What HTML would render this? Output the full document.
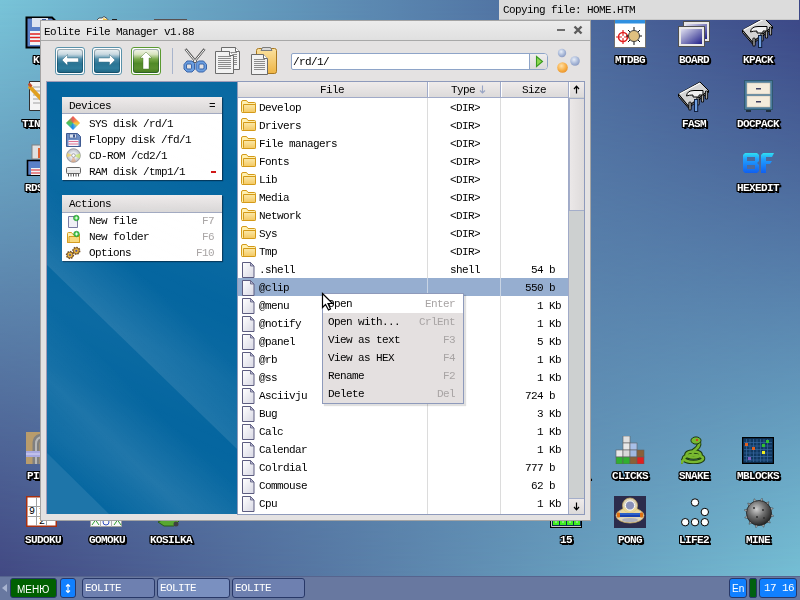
<!DOCTYPE html>
<html><head><meta charset="utf-8">
<style>
*{margin:0;padding:0;box-sizing:border-box}
html,body{width:800px;height:600px;overflow:hidden}
body{position:relative;background:linear-gradient(to right,#404480,#78c4d8);font-family:"Liberation Mono",monospace}
.a{position:absolute}
.t{position:absolute;font-family:"Liberation Mono",monospace;font-size:11px;letter-spacing:-0.6px;line-height:11px;white-space:pre;color:#000;will-change:transform}
.g{color:#a8a4a4}
.lbl{position:absolute;will-change:transform;font-family:"Liberation Mono",monospace;font-size:11px;font-weight:bold;letter-spacing:-0.6px;line-height:11px;white-space:pre;color:#fff;
 text-shadow:-1px 0 #000,0 -1px #000,1px 0 #000,0 1px #000,2px 2px #000,1px 2px #000,2px 1px #000,-1px -1px #000,1px -1px #000,-1px 1px #000}
.hd{position:absolute;top:82px;height:15px;background:linear-gradient(#efebeb,#dcdada);border-left:1px solid #fff}
.fold{position:absolute;width:16px;height:14px}
.doc{position:absolute;width:13px;height:16px}
</style></head><body>
<div class="a" style="left:0;top:0;width:800px;height:600px;background:linear-gradient(to right,#78c4d8,#3a4484);-webkit-mask-image:linear-gradient(to bottom,#000,transparent);mask-image:linear-gradient(to bottom,#000,transparent)"></div>

<svg class="a" style="left:25px;top:16px" width="33" height="33"><path d="M1.5 1.5H27L31.5 6V31.5H1.5Z" fill="#5a80c8" stroke="#000" stroke-width="2"/><rect x="7" y="2" width="16" height="9" fill="#dde4f0"/><rect x="17" y="3" width="4" height="7" fill="#3858a0"/><rect x="5" y="15" width="23" height="14" fill="#f0f4f8"/><path d="M5 18H28M5 21.5H28M5 25H28" stroke="#e02020" stroke-width="1.4"/></svg>
<div class="lbl" style="left:33px;top:55px">KFM</div>
<svg class="a" style="left:28px;top:80px" width="30" height="32"><path d="M1.5 1.5H25.5V30.5H1.5Z" fill="#f4f4f4" stroke="#303030"/><path d="M5 7H22M5 11H22M5 15H22M5 19H22M5 23H22" stroke="#a0a0a0"/><path d="M1 6L16 22" stroke="#e0a020" stroke-width="4"/><path d="M1 6L3 4" stroke="#c05030" stroke-width="4"/></svg>
<div class="lbl" style="left:22px;top:119px">TINYPAD</div>
<svg class="a" style="left:26px;top:144px" width="32" height="32"><rect x="6" y="1" width="18" height="14" fill="#e0e0e0" stroke="#808080"/><rect x="12" y="4" width="6" height="10" fill="#e06030"/><path d="M1.5 16.5H27L30.5 20V31.5H1.5Z" fill="#5a80c8" stroke="#000" stroke-width="1.6"/><rect x="5" y="24" width="21" height="7" fill="#f0f4f8"/><path d="M5 26H26M5 29H26" stroke="#e02020" stroke-width="1.2"/></svg>
<div class="lbl" style="left:25px;top:183px">RDSAVE</div>
<svg class="a" style="left:26px;top:432px" width="32" height="32"><rect width="32" height="32" fill="#b89c6c"/><path d="M10 32V12Q10 5 17 5H32" fill="none" stroke="#808080" stroke-width="7"/><path d="M10 32V12Q10 5 17 5H32" fill="none" stroke="#b8b8b8" stroke-width="2"/><rect x="0" y="19" width="32" height="6" fill="#a8a8e0"/><path d="M0 22H32" stroke="#d8d8f8"/></svg>
<div class="lbl" style="left:27px;top:471px">PIPES</div>
<svg class="a" style="left:26px;top:496px" width="31" height="31"><rect x="0.75" y="0.75" width="29.5" height="29.5" fill="#fff" stroke="#a83010" stroke-width="1.5"/><path d="M10.5 1V30M20.5 1V30M1 10.5H30M1 20.5H30" stroke="#a0a0a0"/><text x="3" y="18" font-family="Liberation Mono" font-size="10" fill="#000">9</text><text x="13" y="28" font-family="Liberation Mono" font-size="10" fill="#000">2</text><text x="13" y="18" font-family="Liberation Mono" font-size="10" fill="#000">1</text></svg>
<div class="lbl" style="left:25px;top:535px">SUDOKU</div>
<svg class="a" style="left:90px;top:496px" width="32" height="31"><rect x="0.5" y="0.5" width="31" height="30" fill="#f8f8f8" stroke="#a0a0a0"/><path d="M10.5 0V31M21.5 0V31M0 10.5H32M0 20.5H32" stroke="#b0b0b0"/><path d="M2 29L5.5 24L9 29M24 29L27.5 24L31 29" fill="none" stroke="#30a030"/><circle cx="16" cy="26" r="3" fill="none" stroke="#3050c0"/></svg>
<div class="lbl" style="left:89px;top:535px">GOMOKU</div>
<svg class="a" style="left:154px;top:496px" width="32" height="31"><path d="M4 26L16 20L26 24L20 30H10Z" fill="#58a830" stroke="#2a5a18"/><circle cx="22" cy="28" r="2.5" fill="#404040"/></svg>
<div class="lbl" style="left:150px;top:535px">KOSILKA</div>
<svg class="a" style="left:550px;top:496px" width="32" height="33"><rect x="0.5" y="0.5" width="31" height="31" fill="#0c3050" stroke="#000"/><path d="M1.5 30.5H31M1.5 1V30.5" stroke="#c8c8c8"/><g fill="#40f020"><rect x="3" y="22" width="6" height="7"/><rect x="10" y="22" width="6" height="7"/><rect x="17" y="22" width="6" height="7"/><rect x="24" y="22" width="6" height="7"/></g><g fill="#a0e8a0" opacity=".7"><rect x="5" y="24" width="2" height="3"/><rect x="12" y="24" width="2" height="3"/><rect x="19" y="24" width="2" height="3"/><rect x="26" y="24" width="2" height="3"/></g></svg>
<div class="lbl" style="left:560px;top:535px">15</div>
<svg class="a" style="left:95px;top:15px" width="24" height="6"><path d="M1.5 5.5L4 3H7L9 1.5L12 3.5L13.5 5.5Z" fill="#f8f8f0" stroke="#303030" stroke-width=".8"/><path d="M8 4L12 5" stroke="#f0c040" stroke-width="1.5"/><rect x="17" y="4" width="5" height="2" fill="#202020"/></svg>
<svg class="a" style="left:154px;top:18px" width="33" height="3"><rect x="0" y="1" width="33" height="2" fill="#585050"/></svg>
<div class="lbl" style="left:542px;top:471px">FREECELL</div>
<svg class="a" style="left:614px;top:16px" width="32" height="32"><rect x="0.5" y="0.5" width="31" height="31" fill="#fff" stroke="#707070"/><rect x="1" y="1" width="30" height="6.5" fill="#3090e0"/><circle cx="9" cy="21" r="4.5" fill="none" stroke="#e02020" stroke-width="1.6"/><path d="M9 14V28M2 21H16" stroke="#e02020" stroke-width="1.2"/><circle cx="9" cy="21" r="1.2" fill="#fff"/><path d="M14 14L26 26M26 14L14 26M20 11V29M12 20H28" stroke="#101010" stroke-width="1"/><circle cx="20" cy="20" r="5.5" fill="#e0c080" stroke="#404040"/></svg>
<div class="lbl" style="left:615px;top:55px">MTDBG</div>
<svg class="a" style="left:678px;top:16px" width="33" height="32"><defs><linearGradient id="bdg" x1="0" y1="0" x2="1" y2="1"><stop offset="0" stop-color="#e0e0f0"/><stop offset="1" stop-color="#202088"/></linearGradient></defs><rect x="5.5" y="5.5" width="26" height="20" fill="#e8e8e8" stroke="#505050"/><rect x="8" y="8" width="21" height="15" fill="url(#bdg)"/><rect x="0.5" y="10.5" width="26" height="20" fill="#e8e8e8" stroke="#505050"/><rect x="3" y="13" width="21" height="15" fill="url(#bdg)"/></svg>
<div class="lbl" style="left:679px;top:55px">BOARD</div>
<svg class="a" style="left:742px;top:16px" width="34" height="34"><path d="M0.5 14L0.5 16.5L10.5 28L30.5 12.5V10.5L10.5 26Z" fill="#909090" stroke="#000" stroke-width="1"/><path d="M0.5 14L22 2L30.5 10.5L10.5 26Z" fill="#d4d4d4" stroke="#000" stroke-width="1"/><path d="M1.5 14L22 3" stroke="#fff" stroke-width="1.2"/><g stroke="#000" stroke-width="3.2" stroke-linecap="round"><path d="M12 23V29M20 18V24M24.5 15V21M28.5 12V18"/></g><g stroke="#a8a8a8" stroke-width="1.4" stroke-linecap="round"><path d="M12 23V29M20 18V24M24.5 15V21M28.5 12V18"/></g><path d="M8.5 16Q9 10.5 16 10.5H25V15H21V17H15V15Q11 15 8.5 16Z" fill="#f0f0f0" stroke="#000"/><rect x="16.5" y="19.5" width="3.2" height="12" fill="#70a0e0" stroke="#102040"/></svg>
<div class="lbl" style="left:743px;top:55px">KPACK</div>
<svg class="a" style="left:678px;top:80px" width="34" height="34"><path d="M0.5 14L0.5 16.5L10.5 28L30.5 12.5V10.5L10.5 26Z" fill="#909090" stroke="#000" stroke-width="1"/><path d="M0.5 14L22 2L30.5 10.5L10.5 26Z" fill="#d4d4d4" stroke="#000" stroke-width="1"/><path d="M1.5 14L22 3" stroke="#fff" stroke-width="1.2"/><g stroke="#000" stroke-width="3.2" stroke-linecap="round"><path d="M12 23V29M20 18V24M24.5 15V21M28.5 12V18"/></g><g stroke="#a8a8a8" stroke-width="1.4" stroke-linecap="round"><path d="M12 23V29M20 18V24M24.5 15V21M28.5 12V18"/></g><path d="M8.5 16Q9 10.5 16 10.5H25V15H21V17H15V15Q11 15 8.5 16Z" fill="#f0f0f0" stroke="#000"/><rect x="16.5" y="19.5" width="3.2" height="12" fill="#70a0e0" stroke="#102040"/></svg>
<div class="lbl" style="left:682px;top:119px">FASM</div>
<svg class="a" style="left:744px;top:80px" width="29" height="32"><rect x="0.5" y="0.5" width="28" height="29" fill="#4a7c9c" stroke="#305870"/><rect x="3" y="3" width="23" height="11" fill="#f4ecdc" stroke="#c8c0b0" stroke-width=".6"/><rect x="3" y="16" width="23" height="11" fill="#f4ecdc" stroke="#c8c0b0" stroke-width=".6"/><rect x="12" y="8" width="5" height="1.5" fill="#404060"/><rect x="12" y="21" width="5" height="1.5" fill="#404060"/><rect x="2" y="30" width="5" height="2" fill="#203040"/><rect x="22" y="30" width="5" height="2" fill="#203040"/></svg>
<div class="lbl" style="left:737px;top:119px">DOCPACK</div>
<svg class="a" style="left:742px;top:152px" width="32" height="22"><defs><linearGradient id="hx" x1="0" y1="0" x2="0" y2="1"><stop offset="0" stop-color="#30e0f0"/><stop offset=".3" stop-color="#20a0ff"/><stop offset="1" stop-color="#1060f0"/></linearGradient></defs><path d="M3 1H15L17 3V9L15 11L17 13V19L15 21H3L1 19V3Z M5 5V9H13V5Z M5 13V17H13V13Z" fill="url(#hx)" fill-rule="evenodd"/><path d="M21 1H32L30 5H24V9H30L28 12H24V21H19V3Z" fill="url(#hx)"/></svg>
<div class="lbl" style="left:737px;top:183px">HEXEDIT</div>
<svg class="a" style="left:615px;top:436px" width="30" height="28"><g stroke="#606060" stroke-width=".6"><rect x="8" y="0" width="7" height="7" fill="#e0e0e0"/><rect x="8" y="7" width="7" height="7" fill="#e8e8e8"/><rect x="15" y="7" width="7" height="7" fill="#a8c0e8"/><rect x="1" y="14" width="7" height="7" fill="#e8e8e8"/><rect x="8" y="14" width="7" height="7" fill="#d8d8d8"/><rect x="15" y="14" width="7" height="7" fill="#a0b8e0"/><rect x="22" y="14" width="7" height="7" fill="#8a6038"/><rect x="1" y="21" width="7" height="7" fill="#30b030"/><rect x="8" y="21" width="7" height="7" fill="#30b030"/><rect x="15" y="21" width="7" height="7" fill="#8a6038"/><rect x="22" y="21" width="7" height="7" fill="#e02020"/></g></svg>
<div class="lbl" style="left:612px;top:471px">CLICKS</div>
<svg class="a" style="left:681px;top:436px" width="25" height="28"><g fill="none" stroke="#1c3a10" stroke-width="4.6"><ellipse cx="12.5" cy="22.5" rx="9.5" ry="3.5"/><ellipse cx="12.5" cy="18.5" rx="7" ry="3"/><path d="M17 5Q20 9 15 13Q11 15.5 12 18"/><path d="M3 24Q-1 26 2 27"/></g><g fill="none" stroke="#78b830" stroke-width="2.6"><ellipse cx="12.5" cy="22.5" rx="9.5" ry="3.5"/><ellipse cx="12.5" cy="18.5" rx="7" ry="3"/><path d="M17 5Q20 9 15 13Q11 15.5 12 18"/><path d="M3 24Q-1 26 2 27"/></g><ellipse cx="15" cy="4.5" rx="5" ry="3.6" fill="#78b830" stroke="#1c3a10"/><circle cx="16" cy="4" r="1" fill="#e02020"/></svg>
<div class="lbl" style="left:679px;top:471px">SNAKE</div>
<svg class="a" style="left:742px;top:437px" width="32" height="27"><rect x="0.5" y="0.5" width="31" height="26" fill="#103860" stroke="#000" stroke-width="1.5"/><path d="M4.5 2V25M8 2V25M11.5 2V25M15 2V25M18.5 2V25M22 2V25M25.5 2V25M2 5.5H30M2 9H30M2 12.5H30M2 16H30M2 19.5H30M2 23H30" stroke="#3868a0" stroke-width=".7"/><rect x="3" y="6" width="3" height="3" fill="#e06020"/><rect x="10" y="10" width="3" height="3" fill="#e06020"/><rect x="24" y="3" width="3" height="3" fill="#30c030"/><rect x="20" y="7" width="3" height="3" fill="#30c030"/><rect x="20" y="14" width="3" height="3" fill="#f0f020"/><rect x="6" y="20" width="3" height="3" fill="#8060c0"/></svg>
<div class="lbl" style="left:737px;top:471px">MBLOCKS</div>
<svg class="a" style="left:614px;top:496px" width="32" height="32"><rect width="32" height="32" fill="#2c2c4c"/><g fill="#e8e0c0" stroke="#c8a860" stroke-width=".8" opacity=".95"><ellipse cx="16" cy="19.5" rx="14" ry="7.5"/><circle cx="16" cy="9.5" r="7.5"/></g><ellipse cx="16" cy="16" rx="9" ry="6" fill="#f0d890" opacity=".7"/><circle cx="16" cy="9.5" r="4.6" fill="#8890b8" stroke="#fff" stroke-width="1"/><ellipse cx="16" cy="24" rx="8" ry="2" fill="#9098c0" opacity=".6"/><rect x="4" y="17" width="24" height="4" fill="#1840b0"/><path d="M4 18H28" stroke="#4080e0"/><rect x="3" y="16.5" width="3" height="5" rx="1" fill="#e07010"/><rect x="26" y="16.5" width="3" height="5" rx="1" fill="#e07010"/></svg>
<div class="lbl" style="left:618px;top:535px">PONG</div>
<svg class="a" style="left:680px;top:497px" width="30" height="31"><g fill="#fff" stroke="#000" stroke-width="1"><circle cx="15" cy="5.5" r="3.7"/><circle cx="24.8" cy="15" r="3.7"/><circle cx="5.2" cy="25.2" r="3.7"/><circle cx="15" cy="25.2" r="3.7"/><circle cx="24.8" cy="25.2" r="3.7"/></g></svg>
<div class="lbl" style="left:679px;top:535px">LIFE2</div>
<svg class="a" style="left:743px;top:497px" width="32" height="32"><defs><radialGradient id="mn" cx=".4" cy=".35" r=".65"><stop offset="0" stop-color="#d0d0d0"/><stop offset=".5" stop-color="#707070"/><stop offset="1" stop-color="#282828"/></radialGradient></defs><g fill="#e8e8e8" stroke="#303030" stroke-width=".6"><path d="M26.4 20.1L30.7 19.0L27.2 16.2Z"/><path d="M22.9 24.8L27.2 25.9L25.6 21.8Z"/><path d="M17.6 27.1L20.8 30.2L21.4 25.8Z"/><path d="M11.9 26.4L13.0 30.7L15.8 27.2Z"/><path d="M7.2 22.9L6.1 27.2L10.2 25.6Z"/><path d="M4.9 17.6L1.8 20.8L6.2 21.4Z"/><path d="M5.6 11.9L1.3 13.0L4.8 15.8Z"/><path d="M9.1 7.2L4.8 6.1L6.4 10.2Z"/><path d="M14.4 4.9L11.2 1.8L10.6 6.2Z"/><path d="M20.1 5.6L19.0 1.3L16.2 4.8Z"/><path d="M24.8 9.1L25.9 4.8L21.8 6.4Z"/><path d="M27.1 14.4L30.2 11.2L25.8 10.6Z"/></g><circle cx="16" cy="16" r="12.5" fill="url(#mn)" stroke="#202020" stroke-width=".8"/><g fill="#303030"><circle cx="11" cy="11" r="1"/><circle cx="20" cy="13" r="1"/><circle cx="14" cy="20" r="1"/><circle cx="21" cy="21" r="1"/></g></svg>
<div class="lbl" style="left:746px;top:535px">MINE</div>
<div class="a" style="left:499px;top:0;width:300px;height:20px;background:#dcdcdc;border-bottom:1px solid #c8c8c8"></div>
<div class="t" style="left:503px;top:5px">Copying file: HOME.HTM</div>
<div class="a" style="left:40px;top:20px;width:551px;height:501px;background:#e4e2e2;border:1px solid #a4a4a4"></div>
<div class="a" style="left:41px;top:21px;width:549px;height:19px;background:linear-gradient(#ececec,#e0e0e0)"></div>
<div class="a" style="left:41px;top:40px;width:549px;height:1px;background:#a8a8a8"></div>
<div class="t" style="left:44px;top:27px">Eolite File Manager v1.88</div>
<div class="a" style="left:557px;top:29px;width:8px;height:2px;background:#6c6c6c"></div>
<svg class="a" style="left:573px;top:25px" width="10" height="10"><path d="M1.5 1.5L8.5 8.5M8.5 1.5L1.5 8.5" stroke="#5c5c5c" stroke-width="2.4"/></svg>
<div class="a" style="left:55px;top:47px;width:30px;height:28px;border:1px solid #5a92aa;border-radius:3px;background:#fff"></div>
<div class="a" style="left:57px;top:49px;width:26px;height:24px;border-radius:3px;background:linear-gradient(#eef2f4 0%,#c8d8e0 22%,#4a8aa8 42%,#2a7494 62%,#2e7c9c 80%,#1f6482 100%);box-shadow:inset 0 0 0 1px rgba(0,40,60,.35)"></div>
<svg class="a" style="left:55px;top:47px" width="30" height="28"><path d="M7 13L12.5 7.5V11H23.5V15H12.5V18.5Z" fill="#fff" stroke="#1e5a74" stroke-width="0.8" stroke-opacity=".5"/></svg>
<div class="a" style="left:92px;top:47px;width:30px;height:28px;border:1px solid #5a92aa;border-radius:3px;background:#fff"></div>
<div class="a" style="left:94px;top:49px;width:26px;height:24px;border-radius:3px;background:linear-gradient(#eef2f4 0%,#c8d8e0 22%,#4a8aa8 42%,#2a7494 62%,#2e7c9c 80%,#1f6482 100%);box-shadow:inset 0 0 0 1px rgba(0,40,60,.35)"></div>
<svg class="a" style="left:92px;top:47px" width="30" height="28"><path d="M23 13L17.5 7.5V11H6.5V15H17.5V18.5Z" fill="#fff" stroke="#1e5a74" stroke-width="0.8" stroke-opacity=".5"/></svg>
<div class="a" style="left:131px;top:47px;width:30px;height:28px;border:1px solid #5a9a30;border-radius:3px;background:#fff"></div>
<div class="a" style="left:133px;top:49px;width:26px;height:24px;border-radius:3px;background:linear-gradient(#f4f6ec 0%,#d8e4c0 22%,#78a848 42%,#508a28 60%,#5a9030 80%,#467c1c 100%);box-shadow:inset 0 0 0 1px rgba(0,40,60,.35)"></div>
<svg class="a" style="left:131px;top:47px" width="30" height="28"><path d="M15 5L21 11H18V22H12V11H9Z" fill="#fff" stroke="#3a6a18" stroke-width="0.8" stroke-opacity=".5"/></svg>
<div class="a" style="left:172px;top:48px;width:1px;height:26px;background:#a8b4cc"></div>
<svg class="a" style="left:180px;top:46px" width="30" height="30"><path d="M5.5 3L16.5 16.5M24.5 3L13.5 16.5" stroke="#585858" stroke-width="2.6"/><path d="M5.8 3.6L16 16M24.2 3.6L14 16" stroke="#fff" stroke-width="1"/><path d="M4 18.5L7 15L12 15L14.5 17.5L14.5 23.5L12 26L7 26L4 23Z M7 18L11 18L11.5 19L11.5 22.5L11 23L7 23L6.5 22L6.5 19Z" fill="#6a9ee0" fill-rule="evenodd" stroke="#3a64a8" stroke-width="1"/><path d="M26.5 18.5L23.5 15L18.5 15L16.0 17.5L16.0 23.5L18.5 26L23.5 26L26.5 23Z M23.5 18L19.5 18L19.0 19L19.0 22.5L19.5 23L23.5 23L24.0 22L24.0 19Z" fill="#6a9ee0" fill-rule="evenodd" stroke="#3a64a8" stroke-width="1"/></svg>
<svg class="a" style="left:214px;top:46px" width="28" height="29"><path d="M7.5 1.5H21.5L25.5 5.5V23.5H7.5Z" fill="#f2f2f2" stroke="#6c6c6c"/><path d="M10 6.5H23" stroke="#8c8c8c" stroke-width="1"/><path d="M10 8.5H23" stroke="#8c8c8c" stroke-width="1"/><path d="M10 10.5H23" stroke="#8c8c8c" stroke-width="1"/><path d="M10 12.5H23" stroke="#8c8c8c" stroke-width="1"/><path d="M10 14.5H23" stroke="#8c8c8c" stroke-width="1"/><path d="M10 16.5H23" stroke="#8c8c8c" stroke-width="1"/><path d="M10 18.5H23" stroke="#8c8c8c" stroke-width="1"/><path d="M21.5 1.5V5.5H25.5" fill="#fff" stroke="#6c6c6c"/><path d="M1.5 5.5H15.5L19.5 9.5V27.5H1.5Z" fill="#f2f2f2" stroke="#6c6c6c"/><path d="M4 10.5H17" stroke="#8c8c8c" stroke-width="1"/><path d="M4 12.5H17" stroke="#8c8c8c" stroke-width="1"/><path d="M4 14.5H17" stroke="#8c8c8c" stroke-width="1"/><path d="M4 16.5H17" stroke="#8c8c8c" stroke-width="1"/><path d="M4 18.5H17" stroke="#8c8c8c" stroke-width="1"/><path d="M4 20.5H17" stroke="#8c8c8c" stroke-width="1"/><path d="M4 22.5H17" stroke="#8c8c8c" stroke-width="1"/><path d="M15.5 5.5V9.5H19.5" fill="#fff" stroke="#6c6c6c"/></svg>
<svg class="a" style="left:250px;top:46px" width="28" height="30"><defs><linearGradient id="pg" x1="0" y1="0" x2="0" y2="1"><stop offset="0" stop-color="#fbe2a0"/><stop offset="1" stop-color="#eeb444"/></linearGradient></defs><rect x="6.5" y="2.5" width="20" height="25" rx="2" fill="url(#pg)" stroke="#a87820"/><path d="M11 4.5H22L20.5 1.5H12.5Z" fill="#d8d8d8" stroke="#7c7c7c"/><path d="M1.5 8.5H13.5L17.5 12.5V28.5H1.5Z" fill="#f2f2f2" stroke="#6c6c6c"/><path d="M4 13.5H15" stroke="#8c8c8c" stroke-width="1"/><path d="M4 15.5H15" stroke="#8c8c8c" stroke-width="1"/><path d="M4 17.5H15" stroke="#8c8c8c" stroke-width="1"/><path d="M4 19.5H15" stroke="#8c8c8c" stroke-width="1"/><path d="M4 21.5H15" stroke="#8c8c8c" stroke-width="1"/><path d="M4 23.5H15" stroke="#8c8c8c" stroke-width="1"/><path d="M13.5 8.5V12.5H17.5" fill="#fff" stroke="#6c6c6c"/></svg>
<div class="a" style="left:291px;top:53px;width:257px;height:17px;background:#fff;border:1px solid #8ea4c8;border-radius:2px 4px 4px 2px"></div>
<div class="a" style="left:529px;top:54px;width:18px;height:15px;background:linear-gradient(#f0eeee,#dcdada);border-left:1px solid #8ea4c8;border-radius:0 3px 3px 0"></div>
<svg class="a" style="left:535px;top:55px" width="9" height="13"><path d="M1.5 1.5V11.5L7.5 6.5Z" fill="#8cd850" stroke="#3a9a20" stroke-width="1.1"/></svg>
<div class="t" style="left:293px;top:57px">/rd/1/</div>
<svg class="a" style="left:554px;top:47px" width="30" height="30"><defs><radialGradient id="bb" cx=".4" cy=".35" r=".7"><stop offset="0" stop-color="#e8eef8"/><stop offset=".6" stop-color="#a8b8d8"/><stop offset="1" stop-color="#8898c0"/></radialGradient><radialGradient id="ob" cx=".4" cy=".35" r=".7"><stop offset="0" stop-color="#ffe0a8"/><stop offset=".6" stop-color="#f8b048"/><stop offset="1" stop-color="#e89028"/></radialGradient></defs><circle cx="8" cy="6" r="4.2" fill="url(#bb)"/><circle cx="21" cy="14" r="4.8" fill="url(#bb)"/><circle cx="8.5" cy="20.5" r="5.3" fill="url(#ob)"/></svg>
<div class="a" style="left:46px;top:81px;width:191px;height:433px;background:#0566a0;border-left:1px solid #a09cb8;border-top:1px solid #a09cb8"></div>
<!--PANELSTREAKS-->
<div class="a" style="left:62px;top:97px;width:160px;height:83px;background:#fff;box-shadow:1px 1px 1px rgba(0,20,40,.55)"></div>
<div class="a" style="left:62px;top:97px;width:160px;height:17px;background:linear-gradient(#efebeb,#d9d7d7);border-bottom:1px solid #a0a8c0"></div>
<div class="t" style="left:69px;top:101px">Devices</div>
<div class="t" style="left:209px;top:101px">=</div>
<div class="t" style="left:89px;top:119px">SYS disk /rd/1</div>
<div class="t" style="left:89px;top:135px">Floppy disk /fd/1</div>
<div class="t" style="left:89px;top:151px">CD-ROM /cd2/1</div>
<div class="t" style="left:89px;top:167px">RAM disk /tmp1/1</div>
<div class="a" style="left:211px;top:171px;width:5px;height:2px;background:#d01818"></div>
<div class="a" style="left:62px;top:195px;width:160px;height:66px;background:#fff;box-shadow:1px 1px 1px rgba(0,20,40,.55)"></div>
<div class="a" style="left:62px;top:195px;width:160px;height:18px;background:linear-gradient(#efebeb,#d9d7d7);border-bottom:1px solid #a0a8c0"></div>
<div class="t" style="left:69px;top:199px">Actions</div>
<div class="t" style="left:89px;top:216px">New file</div>
<div class="t" style="left:89px;top:232px">New folder</div>
<div class="t" style="left:89px;top:248px">Options</div>
<div class="t g" style="left:202px;top:216px">F7</div>
<div class="t g" style="left:202px;top:232px">F6</div>
<div class="t g" style="left:196px;top:248px">F10</div>
<div class="a" style="left:68px;top:118px;width:10px;height:10px;transform:rotate(45deg);background:conic-gradient(from -45deg,#f05858 0%,#f8a040 18%,#f0d040 30%,#50b0e0 42%,#2088f0 52%,#40c080 66%,#50c050 78%,#f05858 100%)"></div>
<svg class="a" style="left:66px;top:133px" width="15" height="14"><path d="M0.5 0.5H11.5L14.5 3.5V13.5H0.5Z" fill="#6a8cc4" stroke="#3c5890"/><rect x="3.5" y="1" width="7" height="4" fill="#d8e0f0" stroke="#3c5890" stroke-width=".6"/><rect x="7" y="1.5" width="2" height="3" fill="#3c5890"/><rect x="2.5" y="7" width="10" height="6" fill="#f4f4fa"/><path d="M2.5 8.5H12.5M2.5 11H12.5" stroke="#e07090" stroke-width="1.2"/></svg>
<svg class="a" style="left:66px;top:148px" width="15" height="15"><defs><radialGradient id="cd" cx=".5" cy=".5" r=".5"><stop offset=".2" stop-color="#fff"/><stop offset=".6" stop-color="#d8dce4"/><stop offset="1" stop-color="#b0b4bc"/></radialGradient></defs><circle cx="7.5" cy="7.5" r="6.8" fill="url(#cd)" stroke="#8c8c94" stroke-width=".8"/><path d="M7.5 7.5L14 5.5A6.8 6.8 0 0 1 13.5 10.5Z" fill="#c8e870" opacity=".8"/><path d="M7.5 7.5L1 9A6.8 6.8 0 0 1 1.5 5Z" fill="#f0d060" opacity=".8"/><path d="M7.5 7.5L10 13.5A6.8 6.8 0 0 1 5 14Z" fill="#e8a070" opacity=".6"/><circle cx="7.5" cy="7.5" r="1.8" fill="#fff" stroke="#8c8c94" stroke-width=".8"/></svg>
<svg class="a" style="left:66px;top:167px" width="15" height="10"><rect x="0.5" y="0.5" width="14" height="6" rx="1" fill="#e8e8e8" stroke="#606060"/><path d="M1.5 2H13.5" stroke="#fff"/><path d="M2.5 7V9.5M5 7V9.5M7.5 7V9.5M10 7V9.5M12.5 7V9.5" stroke="#505050"/></svg>
<svg class="a" style="left:67px;top:214px" width="14" height="15"><path d="M1.5 2.5H10.5V13.5H1.5Z" fill="#f0f0f6" stroke="#7878a0"/><circle cx="9.3" cy="4" r="2.8" fill="#38c040" stroke="#209030" stroke-width=".6"/><path d="M9.3 2.4V5.6M7.7 4H10.9" stroke="#e8ffe8" stroke-width="1.1"/></svg>
<svg class="a" style="left:66px;top:230px" width="15" height="14"><path d="M1.5 3.5Q1.5 2.5 2.5 2.5H5.5L7 4.5H13.5V12.5H1.5Z" fill="#fff0b0" stroke="#d49a18"/><path d="M3 6.5H13.5V12.5H1.5Q3 12.5 3 11.5Z" fill="#f8d878" stroke="#d49a18"/><circle cx="10.5" cy="4" r="2.8" fill="#38c040" stroke="#209030" stroke-width=".6"/><path d="M10.5 2.4V5.6M8.9 4H12.1" stroke="#e8ffe8" stroke-width="1.1"/></svg>
<svg class="a" style="left:65px;top:246px" width="16" height="14"><g fill="none" stroke="#6a4418" stroke-width="1.5" stroke-dasharray="1.5 1.1"><circle cx="5" cy="9" r="3.4"/><circle cx="11.3" cy="4.8" r="3.4"/></g><g fill="#e8b030" stroke="#6a4418" stroke-width=".8"><circle cx="5" cy="9" r="3"/><circle cx="11.3" cy="4.8" r="3"/></g><circle cx="5" cy="9" r="1.1" fill="#5050a0"/><circle cx="11.3" cy="4.8" r="1.1" fill="#5050a0"/></svg>
<svg class="a" style="left:47px;top:82px" width="190" height="432"><defs><linearGradient id="sa" gradientUnits="userSpaceOnUse" x1="0" y1="183" x2="42" y2="140"><stop offset="0" stop-color="#fff" stop-opacity=".10"/><stop offset="1" stop-color="#fff" stop-opacity="0"/></linearGradient><linearGradient id="sb" gradientUnits="userSpaceOnUse" x1="0" y1="183" x2="-94" y2="280"><stop offset="0" stop-color="#fff" stop-opacity="0"/><stop offset=".2" stop-color="#fff" stop-opacity="0"/><stop offset=".6" stop-color="#fff" stop-opacity=".09"/><stop offset=".75" stop-color="#fff" stop-opacity=".05"/><stop offset="1" stop-color="#fff" stop-opacity=".0"/></linearGradient><linearGradient id="sa2" gradientUnits="userSpaceOnUse" x1="0" y1="10" x2="-26" y2="66" spreadMethod="reflect"><stop offset="0" stop-color="#fff" stop-opacity="0"/><stop offset="1" stop-color="#fff" stop-opacity=".03"/></linearGradient></defs><path d="M0 0H190V367L0 183Z" fill="url(#sa)"/><path d="M0 0H190V367L0 183Z" fill="url(#sa2)"/><path d="M0 183L190 367V432H62L0 371Z" fill="url(#sb)"/><path d="M0 183L190 367V432H62L0 371Z" fill="url(#sa2)"/><path d="M0 371L62 432H0Z" fill="#fff" fill-opacity=".1"/></svg>
<div class="a" style="left:237px;top:81px;width:348px;height:434px;background:#fff;border:1px solid #8e9abb"></div>
<div class="a" style="left:238px;top:82px;width:346px;height:15px;background:linear-gradient(#efebeb,#dcdada)"></div>
<div class="a" style="left:238px;top:97px;width:346px;height:1px;background:#a0aac8"></div>
<div class="a" style="left:427px;top:82px;width:1px;height:15px;background:#a0aac8"></div>
<div class="a" style="left:428px;top:82px;width:1px;height:15px;background:#fff"></div>
<div class="a" style="left:500px;top:82px;width:1px;height:15px;background:#a0aac8"></div>
<div class="a" style="left:501px;top:82px;width:1px;height:15px;background:#fff"></div>
<div class="a" style="left:568px;top:82px;width:1px;height:15px;background:#a0aac8"></div>
<div class="a" style="left:569px;top:82px;width:1px;height:15px;background:#fff"></div>
<div class="t" style="left:320px;top:85px">File</div>
<div class="t" style="left:451px;top:85px">Type</div>
<svg class="a" style="left:479px;top:85px" width="7" height="9"><path d="M3.5 0.5V8M1 5.5L3.5 8L6 5.5" stroke="#98a4c4" stroke-width="1.1" fill="none"/></svg>
<div class="t" style="left:522px;top:85px">Size</div>
<div class="a" style="left:427px;top:98px;width:1px;height:416px;background:#dcdcdc"></div>
<div class="a" style="left:500px;top:98px;width:1px;height:416px;background:#dcdcdc"></div>
<div class="a" style="left:238px;top:278px;width:330px;height:18px;background:#96aed0"></div>
<div class="a" style="left:427px;top:278px;width:1px;height:18px;background:#c8d4e4"></div>
<div class="a" style="left:500px;top:278px;width:1px;height:18px;background:#c8d4e4"></div>
<svg class="fold" style="left:241px;top:100px" width="16" height="14"><use href="#fold"/></svg>
<div class="t" style="left:259px;top:103px">Develop</div>
<div class="t" style="left:450px;top:103px">&lt;DIR&gt;</div>
<svg class="fold" style="left:241px;top:118px" width="16" height="14"><use href="#fold"/></svg>
<div class="t" style="left:259px;top:121px">Drivers</div>
<div class="t" style="left:450px;top:121px">&lt;DIR&gt;</div>
<svg class="fold" style="left:241px;top:136px" width="16" height="14"><use href="#fold"/></svg>
<div class="t" style="left:259px;top:139px">File managers</div>
<div class="t" style="left:450px;top:139px">&lt;DIR&gt;</div>
<svg class="fold" style="left:241px;top:154px" width="16" height="14"><use href="#fold"/></svg>
<div class="t" style="left:259px;top:157px">Fonts</div>
<div class="t" style="left:450px;top:157px">&lt;DIR&gt;</div>
<svg class="fold" style="left:241px;top:172px" width="16" height="14"><use href="#fold"/></svg>
<div class="t" style="left:259px;top:175px">Lib</div>
<div class="t" style="left:450px;top:175px">&lt;DIR&gt;</div>
<svg class="fold" style="left:241px;top:190px" width="16" height="14"><use href="#fold"/></svg>
<div class="t" style="left:259px;top:193px">Media</div>
<div class="t" style="left:450px;top:193px">&lt;DIR&gt;</div>
<svg class="fold" style="left:241px;top:208px" width="16" height="14"><use href="#fold"/></svg>
<div class="t" style="left:259px;top:211px">Network</div>
<div class="t" style="left:450px;top:211px">&lt;DIR&gt;</div>
<svg class="fold" style="left:241px;top:226px" width="16" height="14"><use href="#fold"/></svg>
<div class="t" style="left:259px;top:229px">Sys</div>
<div class="t" style="left:450px;top:229px">&lt;DIR&gt;</div>
<svg class="fold" style="left:241px;top:244px" width="16" height="14"><use href="#fold"/></svg>
<div class="t" style="left:259px;top:247px">Tmp</div>
<div class="t" style="left:450px;top:247px">&lt;DIR&gt;</div>
<svg class="doc" style="left:242px;top:262px" width="13" height="16"><use href="#doc"/></svg>
<div class="t" style="left:259px;top:265px">.shell</div>
<div class="t" style="left:450px;top:265px">shell</div>
<div class="t" style="left:531px;top:265px">54</div>
<div class="t" style="left:549px;top:265px">b</div>
<svg class="doc" style="left:242px;top:280px" width="13" height="16"><use href="#doc"/></svg>
<div class="t" style="left:259px;top:283px">@clip</div>
<div class="t" style="left:525px;top:283px">550</div>
<div class="t" style="left:549px;top:283px">b</div>
<svg class="doc" style="left:242px;top:298px" width="13" height="16"><use href="#doc"/></svg>
<div class="t" style="left:259px;top:301px">@menu</div>
<div class="t" style="left:537px;top:301px">1</div>
<div class="t" style="left:549px;top:301px">Kb</div>
<svg class="doc" style="left:242px;top:316px" width="13" height="16"><use href="#doc"/></svg>
<div class="t" style="left:259px;top:319px">@notify</div>
<div class="t" style="left:537px;top:319px">1</div>
<div class="t" style="left:549px;top:319px">Kb</div>
<svg class="doc" style="left:242px;top:334px" width="13" height="16"><use href="#doc"/></svg>
<div class="t" style="left:259px;top:337px">@panel</div>
<div class="t" style="left:537px;top:337px">5</div>
<div class="t" style="left:549px;top:337px">Kb</div>
<svg class="doc" style="left:242px;top:352px" width="13" height="16"><use href="#doc"/></svg>
<div class="t" style="left:259px;top:355px">@rb</div>
<div class="t" style="left:537px;top:355px">1</div>
<div class="t" style="left:549px;top:355px">Kb</div>
<svg class="doc" style="left:242px;top:370px" width="13" height="16"><use href="#doc"/></svg>
<div class="t" style="left:259px;top:373px">@ss</div>
<div class="t" style="left:537px;top:373px">1</div>
<div class="t" style="left:549px;top:373px">Kb</div>
<svg class="doc" style="left:242px;top:388px" width="13" height="16"><use href="#doc"/></svg>
<div class="t" style="left:259px;top:391px">Asciivju</div>
<div class="t" style="left:525px;top:391px">724</div>
<div class="t" style="left:549px;top:391px">b</div>
<svg class="doc" style="left:242px;top:406px" width="13" height="16"><use href="#doc"/></svg>
<div class="t" style="left:259px;top:409px">Bug</div>
<div class="t" style="left:537px;top:409px">3</div>
<div class="t" style="left:549px;top:409px">Kb</div>
<svg class="doc" style="left:242px;top:424px" width="13" height="16"><use href="#doc"/></svg>
<div class="t" style="left:259px;top:427px">Calc</div>
<div class="t" style="left:537px;top:427px">1</div>
<div class="t" style="left:549px;top:427px">Kb</div>
<svg class="doc" style="left:242px;top:442px" width="13" height="16"><use href="#doc"/></svg>
<div class="t" style="left:259px;top:445px">Calendar</div>
<div class="t" style="left:537px;top:445px">1</div>
<div class="t" style="left:549px;top:445px">Kb</div>
<svg class="doc" style="left:242px;top:460px" width="13" height="16"><use href="#doc"/></svg>
<div class="t" style="left:259px;top:463px">Colrdial</div>
<div class="t" style="left:525px;top:463px">777</div>
<div class="t" style="left:549px;top:463px">b</div>
<svg class="doc" style="left:242px;top:478px" width="13" height="16"><use href="#doc"/></svg>
<div class="t" style="left:259px;top:481px">Commouse</div>
<div class="t" style="left:531px;top:481px">62</div>
<div class="t" style="left:549px;top:481px">b</div>
<svg class="doc" style="left:242px;top:496px" width="13" height="16"><use href="#doc"/></svg>
<div class="t" style="left:259px;top:499px">Cpu</div>
<div class="t" style="left:537px;top:499px">1</div>
<div class="t" style="left:549px;top:499px">Kb</div>
<div class="a" style="left:568px;top:82px;width:16px;height:432px;background:#cdd0d0;border-left:1px solid #a0aac8"></div>
<div class="a" style="left:569px;top:82px;width:15px;height:15px;background:linear-gradient(#efebeb,#dcdada);border-left:1px solid #fff"></div>
<svg class="a" style="left:573px;top:85px" width="8" height="9"><path d="M3.5 1V8.5M1 4L3.5 1.2L6 4" stroke="#000" stroke-width="1.2" fill="none"/></svg>
<div class="a" style="left:569px;top:98px;width:15px;height:113px;background:linear-gradient(to right,#ebe8e8,#dedbdb);border:1px solid #a4aeca;border-right:none"></div>
<div class="a" style="left:569px;top:498px;width:15px;height:16px;background:linear-gradient(#efebeb,#dcdada);border-top:1px solid #a4aeca"></div>
<svg class="a" style="left:573px;top:502px" width="8" height="9"><path d="M3.5 0.5V8M1 5L3.5 7.8L6 5" stroke="#000" stroke-width="1.2" fill="none"/></svg>
<div class="a" style="left:322px;top:293px;width:142px;height:111px;background:#e4e0e0;border:1px solid #8e9abb;box-shadow:2px 2px 1px rgba(0,0,0,.12)"></div>
<div class="a" style="left:323px;top:294px;width:140px;height:19px;background:#fff"></div>
<div class="t" style="left:328px;top:299px">Open</div>
<div class="t g" style="left:425px;top:299px">Enter</div>
<div class="t" style="left:328px;top:317px">Open with...</div>
<div class="t g" style="left:419px;top:317px">CrlEnt</div>
<div class="t" style="left:328px;top:335px">View as text</div>
<div class="t g" style="left:443px;top:335px">F3</div>
<div class="t" style="left:328px;top:353px">View as HEX</div>
<div class="t g" style="left:443px;top:353px">F4</div>
<div class="t" style="left:328px;top:371px">Rename</div>
<div class="t g" style="left:443px;top:371px">F2</div>
<div class="t" style="left:328px;top:389px">Delete</div>
<div class="t g" style="left:437px;top:389px">Del</div>
<svg class="a" style="left:321px;top:292px" width="14" height="20"><path d="M1.5 1.5V15.5L4.5 12.5L7.5 18L9.5 17L7 11.5H11.5Z" fill="#fff" stroke="#000" stroke-width="1.2" stroke-linejoin="miter"/></svg>
<div class="a" style="left:0;top:576px;width:800px;height:24px;background:#6878a0;border-top:1px solid #56648e"></div>
<svg class="a" style="left:2px;top:584px" width="6" height="8"><path d="M5 0V8L0 4Z" fill="#a8b4d0"/></svg>
<div class="a" style="left:10px;top:578px;width:47px;height:20px;background:#006000;border:1px solid #283868;border-radius:3px"></div>
<div class="a" style="left:17px;top:585px;font-family:Liberation Sans;font-size:10px;color:#fff;letter-spacing:0px;line-height:10px;will-change:transform">МЕНЮ</div>
<div class="a" style="left:60px;top:578px;width:16px;height:20px;background:#1080ff;border:1px solid #283868;border-radius:3px"></div>
<svg class="a" style="left:63px;top:581px" width="10" height="14"><path d="M5 3.5V11.5M3 5.5L5 3.5L7 5.5M3 9.5L5 11.5L7 9.5" stroke="#fff" stroke-width="1.1" fill="none"/></svg>
<div class="a" style="left:82px;top:578px;width:73px;height:20px;background:#6e80b0;border:1px solid #283868;border-radius:3px"></div>
<div class="t" style="left:85px;top:583px;color:#fff">EOLITE</div>
<div class="a" style="left:157px;top:578px;width:73px;height:20px;background:#7a90c0;border:1px solid #283868;border-radius:3px"></div>
<div class="t" style="left:160px;top:583px;color:#fff">EOLITE</div>
<div class="a" style="left:232px;top:578px;width:73px;height:20px;background:#6e80b0;border:1px solid #283868;border-radius:3px"></div>
<div class="t" style="left:235px;top:583px;color:#fff">EOLITE</div>
<div class="a" style="left:729px;top:578px;width:18px;height:20px;background:#1080ff;border:1px solid #283868;border-radius:3px"></div>
<div class="a" style="left:732px;top:584px;font-family:Liberation Sans;font-size:10px;color:#fff;line-height:10px;will-change:transform">En</div>
<div class="a" style="left:749px;top:578px;width:8px;height:20px;background:#006010;border:1px solid #283868;border-radius:2px"></div>
<div class="a" style="left:759px;top:578px;width:38px;height:20px;background:#1080ff;border:1px solid #283868;border-radius:3px"></div>
<div class="t" style="left:764px;top:583px;color:#fff">17 16</div>
<svg width="0" height="0" style="position:absolute">
<defs>
<linearGradient id="fg" x1="0" y1="0" x2="0" y2="1"><stop offset="0" stop-color="#fbe8a8"/><stop offset="1" stop-color="#f4c860"/></linearGradient>
<linearGradient id="dg" x1="0" y1="0" x2="1" y2="1"><stop offset="0" stop-color="#ffffff"/><stop offset="1" stop-color="#d8d8e4"/></linearGradient>
<symbol id="fold" viewBox="0 0 16 14"><path d="M0.5 2Q0.5 0.5 2 0.5H5.5L7 2.5H13.5Q14.5 2.5 14.5 3.5V11.5Q14.5 12.5 13.5 12.5H1.5Q0.5 12.5 0.5 11.5Z" fill="#fff0b0" stroke="#d49a18"/><path d="M2.5 4.5H14.5V11.5Q14.5 12.5 13.5 12.5H1.5Q2.5 12.5 2.5 11.5Z" fill="url(#fg)" stroke="#d49a18"/></symbol>
<symbol id="doc" viewBox="0 0 13 16"><path d="M0.5 0.5H8.5L12 4V15.5H0.5Z" fill="url(#dg)" stroke="#5c5c80"/><path d="M8.5 0.5V4H12Z" fill="#b8b8d0" stroke="#5c5c80" stroke-width=".8"/></symbol>
</defs></svg>
</body></html>
